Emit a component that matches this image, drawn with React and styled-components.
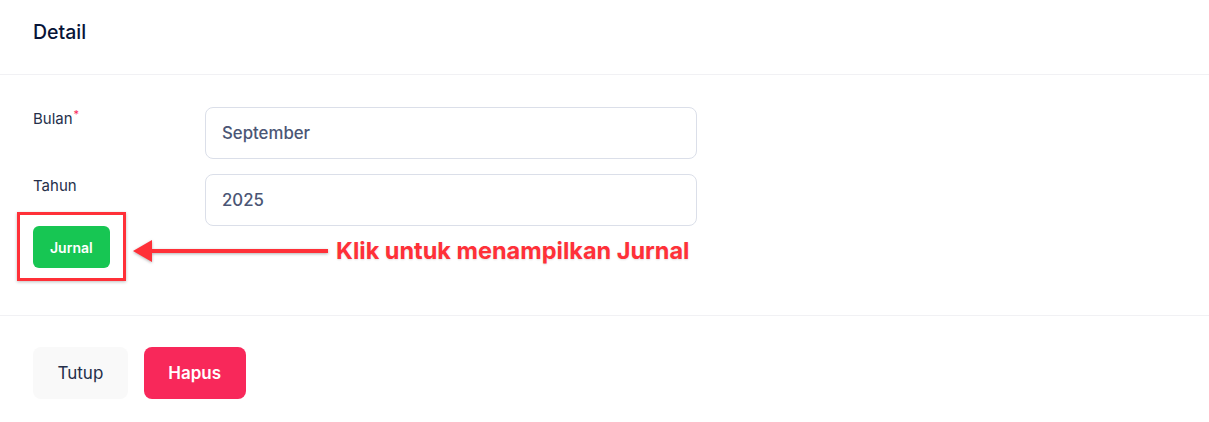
import React from "react";
import styled, {createGlobalStyle} from "styled-components";

const GlobalStyle = createGlobalStyle`
  html, body {
    margin: 0;
    padding: 0;
    background: #ffffff;
    font-family: Inter, "Noto Sans", sans-serif;
  }
`;

const Card = styled.div`
  width: 1209px;
  background: #ffffff;
`;

const Header = styled.div`
  height: 75px;
  padding: 0 33px 10px;
  display: flex;
  align-items: center;
  border-bottom: 1px solid #f1f1f4;
  box-sizing: border-box;
`;

const Title = styled.h3`
  margin: 0;
  font-size: 19.5px;
  font-weight: 500;
  color: #071437;
`;

const Body = styled.div`
  padding: 32px 33px 47px;
  border-bottom: 1px solid #f1f1f4;
  display: flex;
  flex-direction: column;
  gap: 15px;
`;

const Row = styled.div`
  display: grid;
  grid-template-columns: 172px 492px;
  align-items: start;
`;

const Label = styled.label`
  font-size: 15px;
  line-height: 20px;
  color: #252f4a;
  padding-top: 2px;
`;

const Required = styled.sup`
  color: #f8285a;
  font-size: 11px;
  margin-left: 1px;
  vertical-align: 6px;
  line-height: 0;
`;

const Field = styled.div`
  height: 52px;
  box-sizing: border-box;
  border: 1px solid #dbdfe9;
  border-radius: 8px;
  padding: 0 16px;
  display: flex;
  align-items: center;
  font-size: 16.8px;
  font-weight: 500;
  color: #4b5675;
`;

const ActionRow = styled.div`
  position: relative;
  margin-top: -15px;
  height: 42px;
`;

const Button = styled.button`
  border: none;
  cursor: pointer;
  font-family: inherit;
  border-radius: ${(p) => (p.small ? "6px" : "8px")};
  height: ${(p) => (p.small ? "42px" : "52px")};
  padding: 0 ${(p) => (p.small ? "17px" : "24.5px")};
  font-size: ${(p) => (p.small ? "14px" : "17px")};
  font-weight: ${(p) => (p.light ? 400 : 600)};
  background: ${(p) => p.bg};
  color: ${(p) => p.fg};
`;

const Highlight = styled.div`
  position: absolute;
  left: -16px;
  top: -14px;
  width: 109px;
  height: 69px;
  box-sizing: border-box;
  border: 3px solid #ff3038;
  box-shadow: 0 1px 3px rgba(0, 0, 0, 0.25);
`;

const Callout = styled.div`
  position: absolute;
  left: 99px;
  top: 10px;
  display: flex;
  align-items: center;
  gap: 7px;
`;

const CalloutText = styled.span`
  font-size: 23.5px;
  font-weight: 700;
  color: #ff3038;
  white-space: nowrap;
  text-shadow: 0 1px 2px rgba(0, 0, 0, 0.12);
`;

const Footer = styled.div`
  padding: 31px 33px;
  display: flex;
  gap: 16px;
`;

const Arrow = () => (
  <svg width="197" height="24" viewBox="0 0 197 24" style={{filter: "drop-shadow(0 1px 1.5px rgba(0,0,0,0.3))"}}>
    <path d="M1 12 L20 1 L20 10 L196 10 L196 14 L20 14 L20 23 Z" fill="#ff3038" />
  </svg>
);

export default function App() {
  return (
    <>
      <GlobalStyle />
      <Card>
        <Header>
          <Title>Detail</Title>
        </Header>
        <Body>
          <Row>
            <Label>
              Bulan<Required>*</Required>
            </Label>
            <Field>September</Field>
          </Row>
          <Row>
            <Label>Tahun</Label>
            <Field>2025</Field>
          </Row>
          <ActionRow>
            <Button small bg="#17c653" fg="#ffffff">Jurnal</Button>
            <Highlight />
            <Callout>
              <Arrow />
              <CalloutText>Klik untuk menampilkan Jurnal</CalloutText>
            </Callout>
          </ActionRow>
        </Body>
        <Footer>
          <Button light bg="#f9f9f9" fg="#252f4a">Tutup</Button>
          <Button bg="#f8285a" fg="#ffffff">Hapus</Button>
        </Footer>
      </Card>
    </>
  );
}
